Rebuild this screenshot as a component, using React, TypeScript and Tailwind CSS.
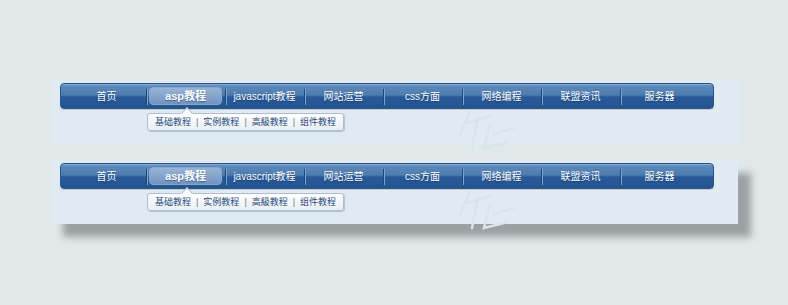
import React from "react";

const items = ["首页", "asp教程", "javascript教程", "网站运营", "css方面", "网络编程", "联盟资讯", "服务器"];
const subs = ["基础教程", "实例教程", "高級教程", "组件教程"];

function Watermark() {
  return (
    <svg className="absolute left-[400px] top-[24px]" width="70" height="50" viewBox="0 0 70 50" fill="none">
      <g stroke="#d9e4ec" strokeWidth="2.5" strokeLinecap="round">
        <path d="M20 8 L10 30" />
        <path d="M14 20 L40 12" />
        <path d="M28 14 L22 44" />
        <path d="M40 20 L34 44 L58 38" />
        <path d="M44 30 L64 24" />
      </g>
    </svg>
  );
}

function NavPanel({ shadow }: { shadow?: boolean }) {
  return (
    <div
      className={
        "relative w-[688px] h-[64px] bg-[#dfeaf2] pl-[10px] pt-[3px] " +
        (shadow ? "shadow-[13px_13px_7px_rgba(70,75,75,0.45)]" : "")
      }
    >
      <Watermark />
      <div className="relative w-[654px] h-[26px] rounded-[4px] border border-[#2c5486] bg-[linear-gradient(to_bottom,#8cb0d6_0px,#5d89bb_2px,#4d7cb1_11px,#28599a_13px,#22558f_100%)] flex items-center pl-[6px] shadow-[0_1px_1px_rgba(0,0,0,0.15)]">
        {items.map((t, i) => (
          <div key={t} className="relative w-[79px] h-full flex items-center justify-center">
            {i > 0 && (
              <div className="absolute left-0 top-[5px] h-[16px] w-[2px] flex">
                <div className="w-px h-full bg-[#1f4677]" />
                <div className="w-px h-full bg-[#7ea3cc]" />
              </div>
            )}
            {i === 1 ? (
              <div className="w-[73px] h-[18px] rounded-[4px] bg-[linear-gradient(to_bottom,#98b5d6,#7194c0)] border border-[#86a6cb] flex items-center justify-center text-white text-[11px] font-bold [text-shadow:0_1px_1px_rgba(20,50,90,0.6)]">
                {t}
              </div>
            ) : (
              <span className="text-white text-[10px] whitespace-nowrap [text-shadow:0_1px_1px_rgba(10,40,80,0.5)]">{t}</span>
            )}
          </div>
        ))}
      </div>
      <div className="relative ml-[87px] mt-[4px] w-[197px] h-[18px] rounded-[3px] border border-[#aebdcf] bg-[linear-gradient(to_bottom,#ffffff,#e9eef4)] shadow-[1px_1px_1px_rgba(120,140,160,0.4)] flex items-center pl-[7px] gap-[5px] text-[9px] leading-none text-[#254a7c] whitespace-nowrap">
        <div className="absolute left-[35px] top-[-5px] w-[8px] h-[8px] rotate-45 bg-white border-l border-t border-[#aebdcf]" />
        {subs.map((s, i) => (
          <React.Fragment key={s}>
            {i > 0 && <span className="text-[#5d7796]">|</span>}
            <span className="relative whitespace-nowrap">{s}</span>
          </React.Fragment>
        ))}
      </div>
    </div>
  );
}

export default function App() {
  return (
    <div
      className="w-[788px] h-[305px] bg-[#e1e8ea] pt-[80px] pl-[50px] flex flex-col gap-[16px] overflow-hidden"
      style={{ fontFamily: '"Liberation Sans", "Noto Sans CJK SC", sans-serif' }}
    >
      <NavPanel />
      <NavPanel shadow />
    </div>
  );
}
